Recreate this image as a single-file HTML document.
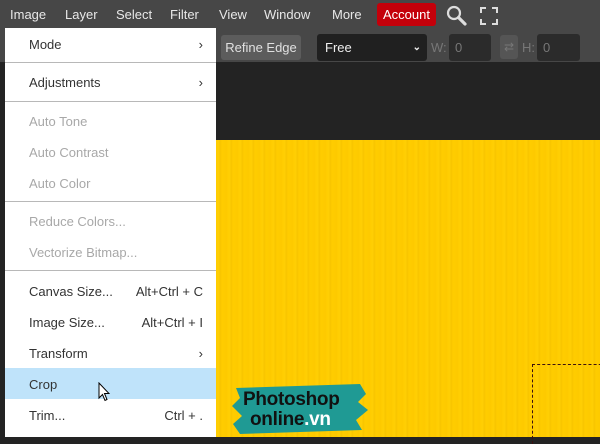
<!DOCTYPE html>
<html><head><style>
*{margin:0;padding:0;box-sizing:border-box}
body{width:600px;height:437px;overflow:hidden;position:relative;background:#232323;font-family:"Liberation Sans",sans-serif;}
.a{position:absolute}
.mb{left:0;top:0;width:600px;height:62px;background:#474747}
.mi{position:absolute;top:7px;color:#e8e8e8;font-size:13px}
.yel{left:216px;top:140px;width:384px;height:297px;background:repeating-linear-gradient(90deg,#ffcc00 0,#ffcf05 3px,#f7c400 4px,#ffcc00 6px,#fdca00 11px)}
.menu{left:5px;top:28px;width:211px;height:409px;background:#fff}
.it{position:absolute;left:24px;font-size:13px;color:#333;width:174px}
.dis{color:#a8a8a8}
.sep{position:absolute;left:0;width:211px;height:1px;background:#b8b8b8}
.r{position:absolute;right:0;top:0}
.in{background:#2b2b2b;border-radius:3px;color:#777;font-size:13px;padding:6px 6px}
</style></head><body>
<div class="a mb"></div>
<div class="mi" style="left:10px">Image</div>
<div class="mi" style="left:65px">Layer</div>
<div class="mi" style="left:116px">Select</div>
<div class="mi" style="left:170px">Filter</div>
<div class="mi" style="left:219px">View</div>
<div class="mi" style="left:264px">Window</div>
<div class="mi" style="left:332px">More</div>
<div class="a" style="left:377px;top:3px;width:59px;height:23px;background:#c4000a;border-radius:3px;color:#fff;font-size:13px;text-align:center;line-height:23px">Account</div>
<svg class="a" style="left:446px;top:5px" width="22" height="22" viewBox="0 0 22 22"><circle cx="8" cy="8" r="6" fill="none" stroke="#ddd" stroke-width="2.2"/><path d="M12.5 12.5L19 19" stroke="#ddd" stroke-width="3.2" stroke-linecap="round"/></svg>
<svg class="a" style="left:480px;top:7px" width="18" height="18" viewBox="0 0 18 18" fill="none" stroke="#ddd" stroke-width="2"><path d="M1 6V1h5M12 1h5v5M17 12v5h-5M6 17H1v-5"/></svg>
<div class="a" style="left:221px;top:35px;width:80px;height:25px;background:#5c5c5c;border-radius:3px;color:#e0e0e0;font-size:13px;line-height:25px;text-align:center">Refine Edge</div>
<div class="a" style="left:317px;top:34px;width:110px;height:27px;background:#202020;border-radius:3px;color:#eee;font-size:13px;line-height:27px;padding-left:8px">Free<span style="position:absolute;right:6px;top:0;font-size:10px;font-weight:bold">&#8964;</span></div>
<div class="a" style="left:431px;top:40px;color:#777;font-size:13px">W:</div>
<div class="a in" style="left:449px;top:34px;width:42px;height:27px">0</div>
<div class="a" style="left:500px;top:35px;width:18px;height:24px;background:#555;border-radius:3px;color:#777;font-size:12px;text-align:center;line-height:24px">&#8644;</div>
<div class="a" style="left:522px;top:40px;color:#777;font-size:13px">H:</div>
<div class="a in" style="left:537px;top:34px;width:43px;height:27px">0</div>
<div class="a" style="left:0;top:62px;width:600px;height:78px;background:#232323"></div>
<div class="a yel"></div>
<div class="a" style="left:532px;top:364px;width:80px;height:80px;border-left:1.5px dashed #3a1010;border-top:1.5px dashed #3a1010"></div>
<svg class="a" style="left:230px;top:380px" width="140" height="57" viewBox="0 0 140 57"><path d="M6 8 L130 4 L136 14 L128 22 L138 30 L126 40 L132 50 L10 54 L3 44 L12 36 L2 26 L10 18 Z" fill="#1f9a94"/></svg>
<div class="a" style="left:243px;top:390px;font-size:19px;font-weight:bold;color:#111;line-height:20px;letter-spacing:-0.3px">Photoshop<br><span style="margin-left:7px">online</span><span style="color:#fff">.vn</span></div>
<div class="a menu">
<div class="it" style="top:9px">Mode<span class="r">&#8250;</span></div>
<div class="sep" style="top:34px"></div>
<div class="it" style="top:47px">Adjustments<span class="r">&#8250;</span></div>
<div class="sep" style="top:73px"></div>
<div class="it dis" style="top:86px">Auto Tone</div>
<div class="it dis" style="top:117px">Auto Contrast</div>
<div class="it dis" style="top:148px">Auto Color</div>
<div class="sep" style="top:173px"></div>
<div class="it dis" style="top:186px">Reduce Colors...</div>
<div class="it dis" style="top:217px">Vectorize Bitmap...</div>
<div class="sep" style="top:242px"></div>
<div class="it" style="top:256px">Canvas Size...<span class="r">Alt+Ctrl + C</span></div>
<div class="it" style="top:287px">Image Size...<span class="r">Alt+Ctrl + I</span></div>
<div class="it" style="top:318px">Transform<span class="r">&#8250;</span></div>
<div class="a" style="left:0;top:340px;width:211px;height:31px;background:#bfe3fa"></div>
<div class="it" style="top:349px">Crop</div>
<div class="it" style="top:380px">Trim...<span class="r">Ctrl + .</span></div>
</div>
<svg class="a" style="left:98px;top:382px" width="12" height="20" viewBox="0 0 12 20"><path d="M1 1V16L4.5 12.5L7 18.5L9 17.5L6.5 11.5H11Z" fill="#fff" stroke="#000" stroke-width="1"/></svg>
</body></html>
